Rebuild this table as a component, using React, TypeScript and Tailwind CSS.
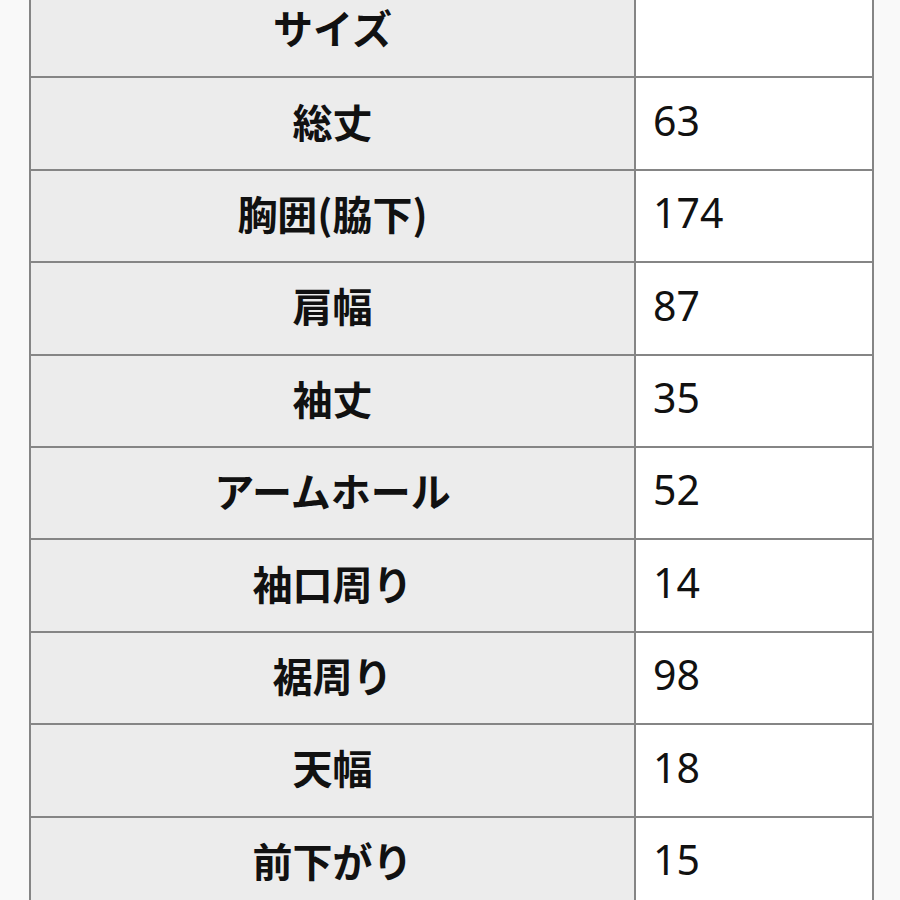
const rows: [string, string][] = [
  ["サイズ", ""],
  ["総丈", "63"],
  ["胸囲(脇下)", "174"],
  ["肩幅", "87"],
  ["袖丈", "35"],
  ["アームホール", "52"],
  ["袖口周り", "14"],
  ["裾周り", "98"],
  ["天幅", "18"],
  ["前下がり", "15"],
];

export default function App() {
  return (
    <div className="w-[900px] h-[900px] overflow-hidden bg-[#f9f9f9] pl-[29px] pr-[26px]">
      <div className="-mt-[18px] border-2 border-[#858585] bg-white">
        {rows.map(([label, value], i) => (
          <div
            key={label}
            className={`flex h-[92.4px] ${i > 0 ? "border-t-2 border-[#858585]" : ""}`}
          >
            <div className="flex w-[605px] items-center justify-center border-r-2 border-[#858585] bg-[#ececec] pb-[6px] text-[40px] font-bold text-[#111] [font-family:'Noto_Sans_CJK_JP',sans-serif]">
              {label}
            </div>
            <div className="flex flex-1 items-center bg-white pb-[6px] pl-[17px] text-[41px] text-[#111] [font-family:'Noto_Sans','Noto_Sans_CJK_JP',sans-serif]">
              {value}
            </div>
          </div>
        ))}
      </div>
    </div>
  );
}
